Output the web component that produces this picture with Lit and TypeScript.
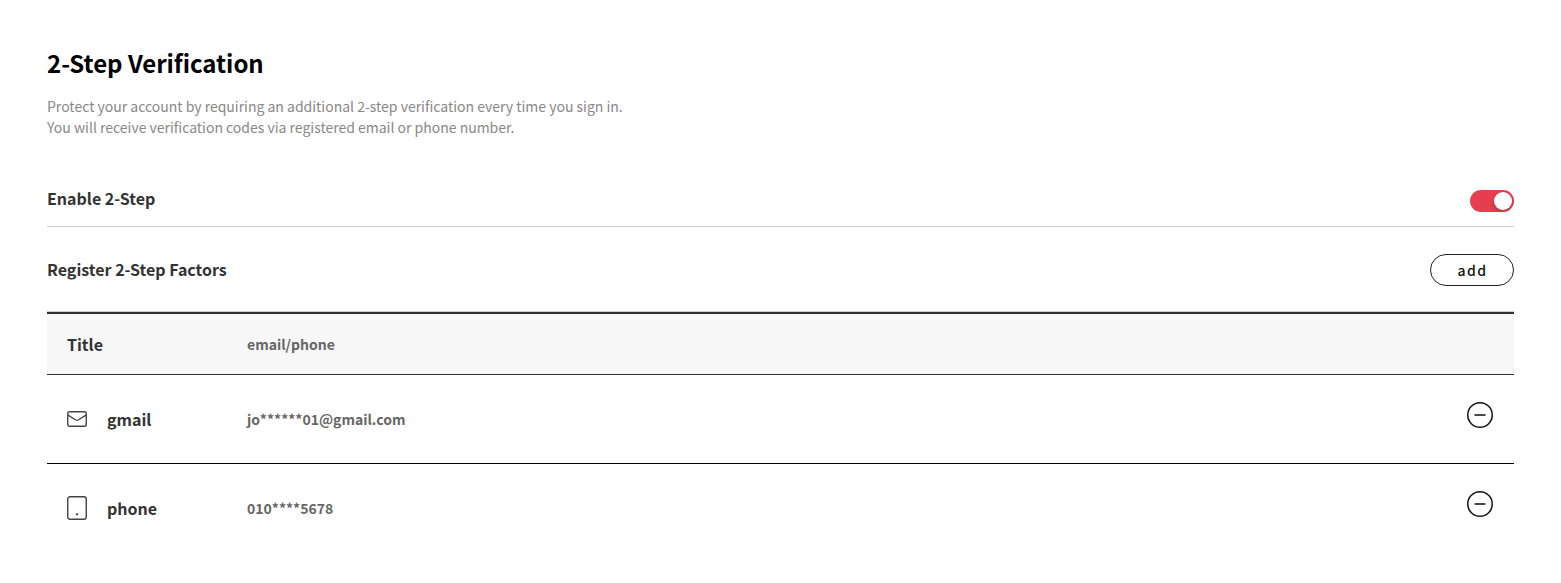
import { LitElement, html, css, svg } from "lit";
import { customElement } from "lit/decorators.js";

const mailIcon = svg`<rect x="0.75" y="0.75" width="18.5" height="14.5" rx="1.8"/><path d="M1 4.2L8.8 9Q10 9.7 11.2 9L19 4.2"/>`;
const phoneIcon = svg`<rect x="0.75" y="0.75" width="18.5" height="22.5" rx="2.3"/><path d="M9.8 18.2h.5" stroke-width="2"/>`;

const factors = [
  { title: "gmail", value: "jo******01@gmail.com", icon: mailIcon, height: 16 },
  { title: "phone", value: "010****5678", icon: phoneIcon, height: 24 },
];

@customElement("app-root")
export class AppRoot extends LitElement {
  static styles = css`
    :host { display: block; box-sizing: border-box; height: 583px; padding: 43px 47px 0; background: #fff; color: #333; font-family: "Noto Sans CJK KR", "Noto Sans", sans-serif; overflow: hidden; }
    * { box-sizing: border-box; }
    h1 { margin: 0; height: 40px; font-size: 24px; line-height: 40px; font-weight: 700; letter-spacing: -0.03px; color: #000; white-space: nowrap; }
    .intro { margin: 13px 0 0; font-size: 14px; line-height: 21px; color: #888; height: 42px; white-space: nowrap; }
    .intro span { display: block; width: max-content; letter-spacing: -0.007px; }
    .setting { display: flex; justify-content: space-between; height: 45px; margin-top: 44px; padding-top: 8px; border-bottom: 1px solid #ccc; }
    .setting .label { line-height: 16px; }
    .label { font-size: 16px; line-height: 20px; font-weight: 700; white-space: nowrap; }
    .toggle { display: flex; justify-content: flex-end; width: 44px; height: 22px; padding: 2px; border-radius: 11px; background: #e53e4f; }
    .knob { width: 18px; height: 18px; border-radius: 50%; background: #fff; box-shadow: 0 2px 4px rgba(0, 35, 11, 0.2); }
    .register { display: flex; justify-content: space-between; align-items: center; height: 32px; margin-top: 27px; }
    .register .label { padding-bottom: 2px; }
    button { font-family: inherit; }
    .add { width: 84px; height: 32px; padding: 0 0 0 1px; border: 1px solid #222; border-radius: 16px; background: #fff; color: #111; font-size: 14px; font-weight: 500; letter-spacing: 1.4px; }
    .table { margin-top: 25px; border-top: 1px solid #ccc; }
    .row { display: grid; grid-template-columns: 40px 140px 1fr auto; align-items: center; height: 89px; padding: 0 20px; border-bottom: 1px solid #000; }
    .row:last-child { height: 88px; border: 0; }
    .head { grid-template-columns: 180px 1fr; height: 63px; background: #f7f7f7; border-top: 2px solid #333; border-bottom-color: #333; }
    .value { font-size: 14px; line-height: 20px; font-weight: 700; color: #666; }
    svg { display: block; fill: none; stroke: #444; stroke-width: 1.4; stroke-linecap: round; stroke-linejoin: round; }
    .remove { padding: 0; border: 0; background: none; margin-top: -8px; }
    .remove svg { stroke: #111; stroke-width: 1.5; }
  `;

  render() {
    return html`
      <h1>2-Step Verification</h1>
      <p class="intro"><span>Protect your account by requiring an additional 2-step verification every time you sign in.</span><span>You will receive verification codes via registered email or phone number.</span></p>
      <div class="setting"><span class="label">Enable 2-Step</span><span class="toggle" role="switch" aria-checked="true"><span class="knob"></span></span></div>
      <div class="register"><span class="label">Register 2-Step Factors</span><button class="add">add</button></div>
      <div class="table">
        <div class="row head"><span class="label">Title</span><span class="value">email/phone</span></div>
        ${factors.map((f) => html`<div class="row">
          <svg width="20" height=${f.height} viewBox="0 0 20 ${f.height}">${f.icon}</svg>
          <span class="label">${f.title}</span><span class="value">${f.value}</span>
          <button class="remove" aria-label="Remove"><svg width="28" height="28" viewBox="0 0 28 28"><circle cx="14" cy="14" r="12.25"/><path d="M9 14h10"/></svg></button>
        </div>`)}
      </div>`;
  }
}
